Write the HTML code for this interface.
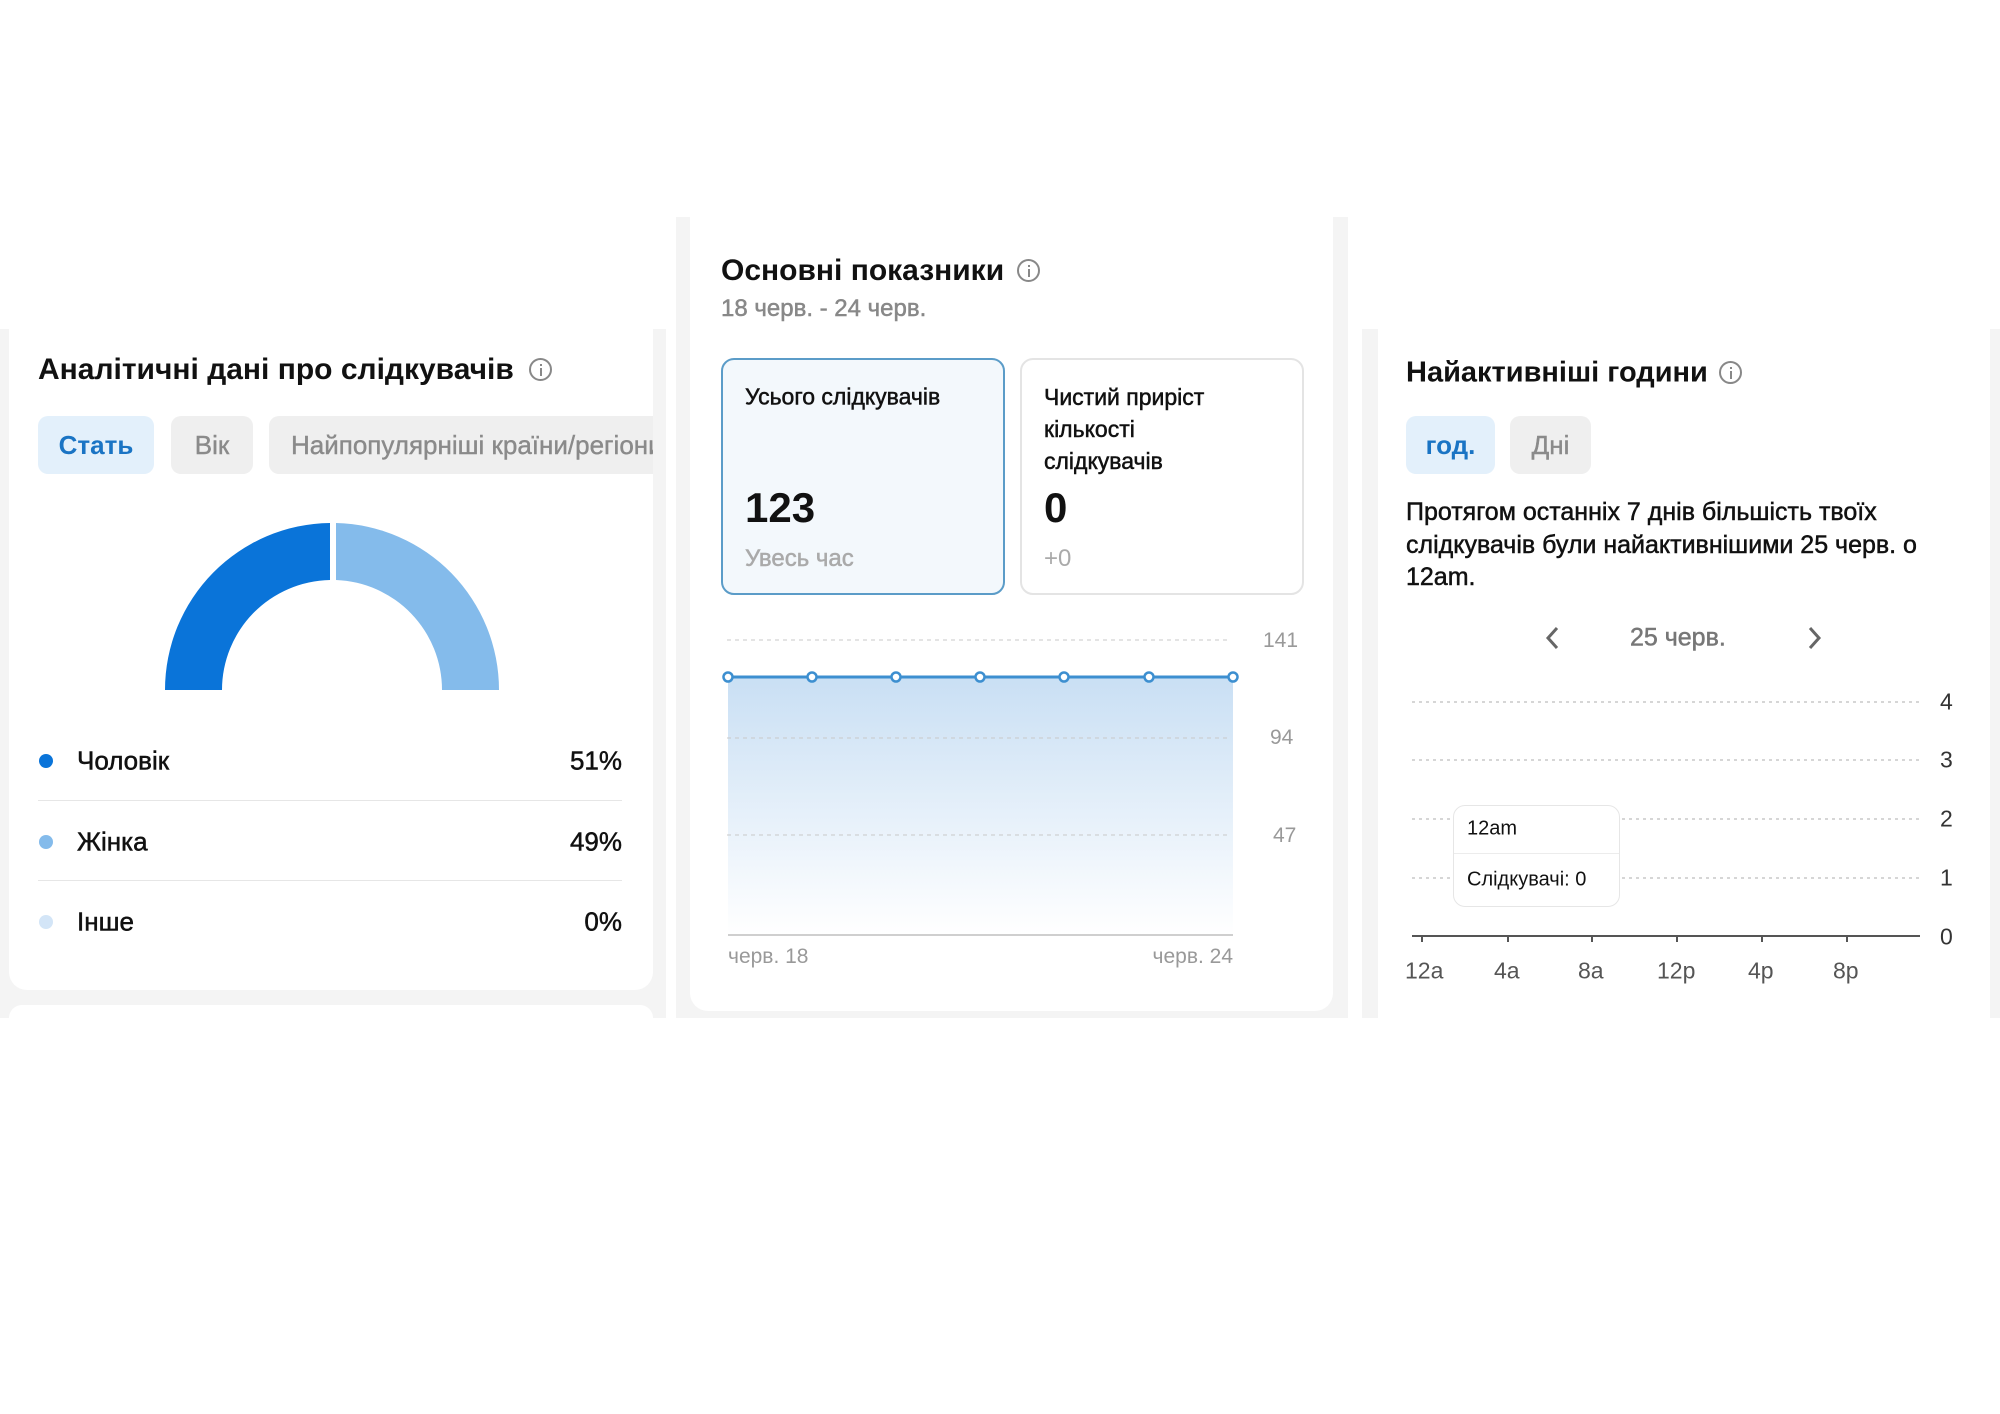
<!DOCTYPE html>
<html><head><meta charset="utf-8">
<style>
*{margin:0;padding:0;box-sizing:border-box}
body{width:2000px;height:1414px;background:#fff;position:relative;overflow:hidden;font-family:"Liberation Sans","DejaVu Sans",sans-serif;color:#111}
.a{position:absolute;white-space:nowrap}
.c{transform:translateY(-50%)}
.gray{position:absolute;background:#f4f4f4}
.card{position:absolute;background:#fff}
.t{font-size:30px;font-weight:bold;color:#111}
.m{-webkit-text-stroke:0.5px currentColor}
.tab{position:absolute;height:58px;border-radius:10px;font-size:26px;line-height:58px;text-align:center}
.on{background:#e3f0fb;color:#1a74c4;font-weight:bold}
.off{background:#efefef;color:#8a8a8a;-webkit-text-stroke:0.4px #8a8a8a}
.lg{font-size:26px;color:#111;-webkit-text-stroke:0.5px #111}
.gl{font-size:21px;color:#999}
.info{position:absolute;width:23px;height:23px;border:2px solid #888;border-radius:50%}
.info:before{content:"";position:absolute;left:8.5px;top:4px;width:2px;height:2px;background:#888}
.info:after{content:"";position:absolute;left:8.5px;top:8px;width:2px;height:8px;background:#888}
</style></head><body>

<div class="gray" style="left:0;top:329px;width:666px;height:689px"></div>
<div class="gray" style="left:676px;top:217px;width:672px;height:801px"></div>
<div class="gray" style="left:1362px;top:329px;width:638px;height:689px"></div>

<div class="card" style="left:9px;top:329px;width:644px;height:661px;border-radius:0 0 18px 18px"></div>
<div class="card" style="left:9px;top:1005px;width:644px;height:13px;border-radius:18px 18px 0 0"></div>
<div class="a c t" style="left:38px;top:370px">Аналітичні дані про слідкувачів</div>
<div class="info" style="left:529px;top:358px"></div>
<div style="position:absolute;left:9px;top:400px;width:644px;height:90px;overflow:hidden">
<div class="tab on" style="left:29px;top:16px;width:116px">Стать</div>
<div class="tab off" style="left:162px;top:16px;width:82px">Вік</div>
<div class="tab off" style="left:260px;top:16px;width:420px;text-align:left;padding-left:22px">Найпопулярніші країни/регіони</div>
</div>
<svg class="a" style="left:0;top:500px" width="666" height="200">
<path d="M165 190 A167 167 0 0 1 330 23 L330 80 A110 110 0 0 0 222 190 Z" fill="#0a74d9"/>
<path d="M336 23 A167 167 0 0 1 499 190 L442 190 A110 110 0 0 0 336 80 Z" fill="#84bbeb"/>
</svg>
<div class="a" style="left:39px;top:754px;width:14px;height:14px;border-radius:50%;background:#0a74d9"></div>
<div class="a c lg" style="left:77px;top:761px">Чоловік</div>
<div class="a c lg" style="right:1378px;top:761px">51%</div>
<div class="a" style="left:38px;top:800px;width:584px;height:1px;background:#e6e6e6"></div>
<div class="a" style="left:39px;top:835px;width:14px;height:14px;border-radius:50%;background:#84bbeb"></div>
<div class="a c lg" style="left:77px;top:842px">Жінка</div>
<div class="a c lg" style="right:1378px;top:842px">49%</div>
<div class="a" style="left:38px;top:880px;width:584px;height:1px;background:#e6e6e6"></div>
<div class="a" style="left:39px;top:915px;width:14px;height:14px;border-radius:50%;background:#d3e5f7"></div>
<div class="a c lg" style="left:77px;top:922px">Інше</div>
<div class="a c lg" style="right:1378px;top:922px">0%</div>

<div class="card" style="left:690px;top:217px;width:643px;height:794px;border-radius:0 0 18px 18px"></div>
<div class="a c t" style="left:721px;top:271px">Основні показники</div>
<div class="info" style="left:1017px;top:259px"></div>
<div class="a c m" style="left:721px;top:309px;font-size:24px;color:#888">18 черв. - 24 черв.</div>
<div class="a" style="left:721px;top:358px;width:284px;height:237px;border:2px solid #5b9cc8;border-radius:13px;background:#f3f8fc"></div>
<div class="a" style="left:1020px;top:358px;width:284px;height:237px;border:2px solid #e4e4e4;border-radius:13px;background:#fff"></div>
<div class="a c m" style="left:745px;top:397px;font-size:23px">Усього слідкувачів</div>
<div class="a c" style="left:745px;top:508px;font-size:42px;font-weight:bold">123</div>
<div class="a c m" style="left:745px;top:559px;font-size:24px;color:#aaa">Увесь час</div>
<div class="a m" style="left:1044px;top:381px;font-size:23px;line-height:32px">Чистий приріст<br>кількості<br>слідкувачів</div>
<div class="a c" style="left:1044px;top:508px;font-size:42px;font-weight:bold">0</div>
<div class="a c" style="left:1044px;top:559px;font-size:24px;color:#aaa">+0</div>
<svg class="a" style="left:690px;top:600px" width="643" height="360">
<defs><linearGradient id="g" x1="0" y1="0" x2="0" y2="1"><stop offset="0" stop-color="#c9dff4"/><stop offset="1" stop-color="#ffffff"/></linearGradient></defs>
<rect x="38" y="77" width="505" height="258" fill="url(#g)"/>
<g stroke="#c8c8c8" stroke-dasharray="4 4" stroke-width="1"><line x1="37" y1="40" x2="541" y2="40"/><line x1="37" y1="138" x2="541" y2="138"/><line x1="37" y1="235" x2="541" y2="235"/></g>
<line x1="38" y1="335" x2="543" y2="335" stroke="#cfcfcf" stroke-width="2"/>
<line x1="38" y1="77" x2="543" y2="77" stroke="#3d8fd0" stroke-width="3"/>
<g fill="#fff" stroke="#3d8fd0" stroke-width="2.5"><circle cx="38" cy="77" r="4.5"/><circle cx="122" cy="77" r="4.5"/><circle cx="206" cy="77" r="4.5"/><circle cx="290" cy="77" r="4.5"/><circle cx="374" cy="77" r="4.5"/><circle cx="459" cy="77" r="4.5"/><circle cx="543" cy="77" r="4.5"/></g>
</svg>
<div class="a c gl" style="left:1263px;top:641px">141</div>
<div class="a c gl" style="left:1270px;top:738px">94</div>
<div class="a c gl" style="left:1273px;top:836px">47</div>
<div class="a c gl" style="left:728px;top:957px">черв. 18</div>
<div class="a c gl" style="right:767px;top:957px">черв. 24</div>

<div class="card" style="left:1378px;top:329px;width:612px;height:689px"></div>
<div class="a c t" style="left:1406px;top:373px;font-size:29px">Найактивніші години</div>
<div class="info" style="left:1719px;top:361px"></div>
<div class="tab on" style="left:1406px;top:416px;width:89px">год.</div>
<div class="tab off" style="left:1510px;top:416px;width:81px">Дні</div>
<div class="a m" style="left:1406px;top:496px;font-size:25px;line-height:32.5px">Протягом останніх 7 днів більшість твоїх<br>слідкувачів були найактивнішими 25 черв. о<br>12am.</div>
<svg class="a" style="left:1540px;top:624px" width="300" height="28"><path d="M17 4 L8 14 L17 24" fill="none" stroke="#666" stroke-width="3"/><path d="M270 4 L279 14 L270 24" fill="none" stroke="#666" stroke-width="3"/></svg>
<div class="a c m" style="left:1630px;top:638px;font-size:25px;color:#777">25 черв.</div>
<svg class="a" style="left:1400px;top:690px" width="560" height="260">
<g stroke="#c8c8c8" stroke-dasharray="3 4" stroke-width="1.5"><line x1="12" y1="12" x2="522" y2="12"/><line x1="12" y1="70" x2="522" y2="70"/><line x1="12" y1="129" x2="522" y2="129"/><line x1="12" y1="188" x2="522" y2="188"/></g>
<line x1="12" y1="246" x2="520" y2="246" stroke="#555" stroke-width="2"/>
<g stroke="#555" stroke-width="2"><line x1="22" y1="246" x2="22" y2="252"/><line x1="108" y1="246" x2="108" y2="252"/><line x1="192" y1="246" x2="192" y2="252"/><line x1="277" y1="246" x2="277" y2="252"/><line x1="362" y1="246" x2="362" y2="252"/><line x1="447" y1="246" x2="447" y2="252"/></g>
</svg>
<div class="a c" style="left:1940px;top:702px;font-size:23px;color:#333">4</div>
<div class="a c" style="left:1940px;top:760px;font-size:23px;color:#333">3</div>
<div class="a c" style="left:1940px;top:819px;font-size:23px;color:#333">2</div>
<div class="a c" style="left:1940px;top:878px;font-size:23px;color:#333">1</div>
<div class="a c" style="left:1940px;top:937px;font-size:23px;color:#333">0</div>
<div class="a c" style="left:1405px;top:971px;font-size:23px;color:#555">12a</div>
<div class="a c" style="left:1494px;top:971px;font-size:23px;color:#555">4a</div>
<div class="a c" style="left:1578px;top:971px;font-size:23px;color:#555">8a</div>
<div class="a c" style="left:1657px;top:971px;font-size:23px;color:#555">12p</div>
<div class="a c" style="left:1748px;top:971px;font-size:23px;color:#555">4p</div>
<div class="a c" style="left:1833px;top:971px;font-size:23px;color:#555">8p</div>
<div class="a" style="left:1453px;top:805px;width:167px;height:102px;background:#fff;border:1.5px solid #e6e6e6;border-radius:12px"></div>
<div class="a" style="left:1454px;top:853px;width:165px;height:1px;background:#ececec"></div>
<div class="a c" style="left:1467px;top:829px;font-size:20px">12am</div>
<div class="a c" style="left:1467px;top:880px;font-size:20px">Слідкувачі: 0</div>
</body></html>
